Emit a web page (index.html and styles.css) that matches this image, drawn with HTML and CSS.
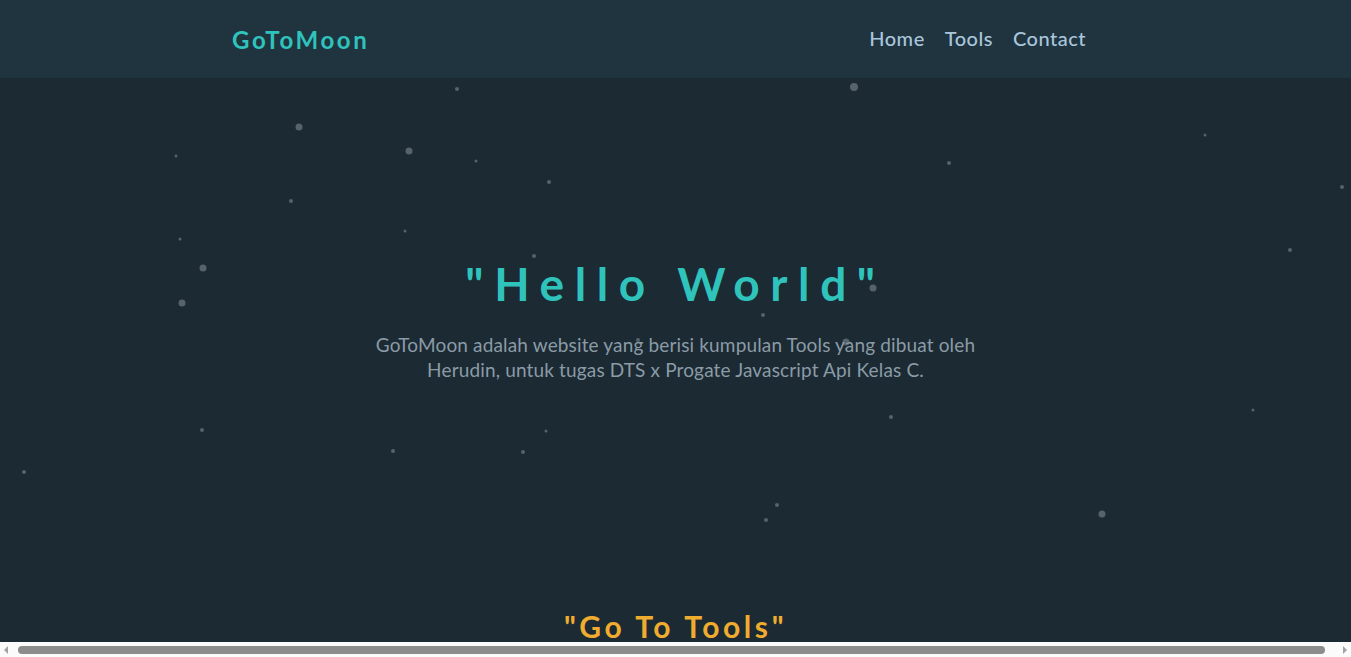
FILE: index.html
```html
<!DOCTYPE html>
<html lang="id">
<head>
<meta charset="utf-8">
<title>GoToMoon</title>
<link rel="stylesheet" href="styles.css">
</head>
<body>
<header class="navbar">
  <div class="nav-inner">
    <a class="logo" href="#">GoToMoon</a>
    <nav class="nav-links">
      <a href="#">Home</a>
      <a href="#">Tools</a>
      <a href="#">Contact</a>
    </nav>
  </div>
</header>
<section class="hero">
  <div class="stars">
    <span class="star s" style="left:457px;top:11px"></span>
    <span class="star xl" style="left:854px;top:9px"></span>
    <span class="star m" style="left:299px;top:49px"></span>
    <span class="star t" style="left:176px;top:78px"></span>
    <span class="star m" style="left:409px;top:73px"></span>
    <span class="star t" style="left:476px;top:83px"></span>
    <span class="star s" style="left:549px;top:104px"></span>
    <span class="star s" style="left:949px;top:85px"></span>
    <span class="star t" style="left:1205px;top:57px"></span>
    <span class="star s" style="left:1342px;top:109px"></span>
    <span class="star s" style="left:291px;top:123px"></span>
    <span class="star t" style="left:405px;top:153px"></span>
    <span class="star t" style="left:180px;top:161px"></span>
    <span class="star s" style="left:534px;top:178px"></span>
    <span class="star m" style="left:203px;top:190px"></span>
    <span class="star s" style="left:1290px;top:172px"></span>
    <span class="star m" style="left:182px;top:225px"></span>
    <span class="star m" style="left:873px;top:210px"></span>
    <span class="star s" style="left:763px;top:237px"></span>
    <span class="star m" style="left:846px;top:264px"></span>
    <span class="star s" style="left:638px;top:262px"></span>
    <span class="star t" style="left:1253px;top:332px"></span>
    <span class="star s" style="left:891px;top:339px"></span>
    <span class="star s" style="left:202px;top:352px"></span>
    <span class="star t" style="left:546px;top:353px"></span>
    <span class="star s" style="left:393px;top:373px"></span>
    <span class="star s" style="left:523px;top:374px"></span>
    <span class="star s" style="left:24px;top:394px"></span>
    <span class="star s" style="left:777px;top:427px"></span>
    <span class="star s" style="left:766px;top:442px"></span>
    <span class="star m" style="left:1102px;top:436px"></span>
  </div>
  <div class="hero-content">
    <h1 class="hero-title">"Hello World"</h1>
    <p class="hero-text">GoToMoon adalah website yang berisi kumpulan Tools yang dibuat oleh Herudin, untuk tugas DTS x Progate Javascript Api Kelas C.</p>
  </div>
</section>
<section class="tools">
  <h2 class="tools-title">"Go To Tools"</h2>
</section>
<div class="hscroll" aria-hidden="true">
  <span class="arrow arrow-left"></span>
  <span class="thumb"></span>
  <span class="arrow arrow-right"></span>
</div>
</body>
</html>
```

FILE: styles.css
```css
html {
  overflow: hidden;
}

body {
  margin: 0;
  background: #1b2a33;
  font-family: "Lato", "Inter", sans-serif;
  color: #c8d4dc;
}

a {
  text-decoration: none;
}

.navbar {
  background: #203440;
  height: 78px;
  display: flex;
  align-items: center;
}

.nav-inner {
  width: 854px;
  margin-left: 232px;
  display: flex;
  justify-content: space-between;
  align-items: center;
}

.logo {
  color: #2fc3bc;
  font-size: 24px;
  font-weight: 700;
  letter-spacing: 2.6px;
}

.nav-links {
  display: flex;
  gap: 20px;
  margin-top: -3px;
}

.nav-links a {
  color: #a9c6dc;
  font-size: 20px;
  font-weight: 500;
  letter-spacing: 0.5px;
}

.hero {
  position: relative;
  height: 500px;
  display: flex;
  justify-content: center;
}

.stars {
  position: absolute;
  inset: 0;
}

.star {
  position: absolute;
  border-radius: 50%;
  background: #56636b;
  transform: translate(-50%, -50%);
}

.star.t { width: 3px; height: 3px; }
.star.s { width: 4px; height: 4px; }
.star.m { width: 7px; height: 7px; }
.star.xl { width: 8px; height: 8px; }

.hero-content {
  position: relative;
  width: 640px;
  text-align: center;
  padding-top: 178px;
}

.hero-title {
  margin: 0;
  color: #2fc3bc;
  font-size: 46px;
  font-weight: 700;
  letter-spacing: 10.6px;
  line-height: 56px;
}

.hero-text {
  margin: 20px 0 0;
  color: #8b9ba6;
  font-size: 19px;
  letter-spacing: 0.15px;
  line-height: 25px;
}

.tools {
  text-align: center;
  padding-top: 30px;
}

.tools-title {
  margin: 0;
  color: #f0ac2e;
  font-size: 30px;
  font-weight: 700;
  letter-spacing: 3.6px;
}

.hscroll {
  position: fixed;
  left: 0;
  right: 0;
  bottom: 0;
  height: 15px;
  background: #fbfbfb;
  display: flex;
  align-items: center;
  gap: 6px;
  padding: 0 4px;
}

.thumb {
  flex: 1;
  height: 8px;
  margin: 0 12px 0 4px;
  border-radius: 4px;
  background: #8c8c8c;
}

.arrow {
  width: 0;
  height: 0;
  border-top: 4px solid transparent;
  border-bottom: 4px solid transparent;
}

.arrow-left {
  border-right: 4px solid #a3a3a3;
}

.arrow-right {
  border-left: 4px solid #a3a3a3;
}
```
